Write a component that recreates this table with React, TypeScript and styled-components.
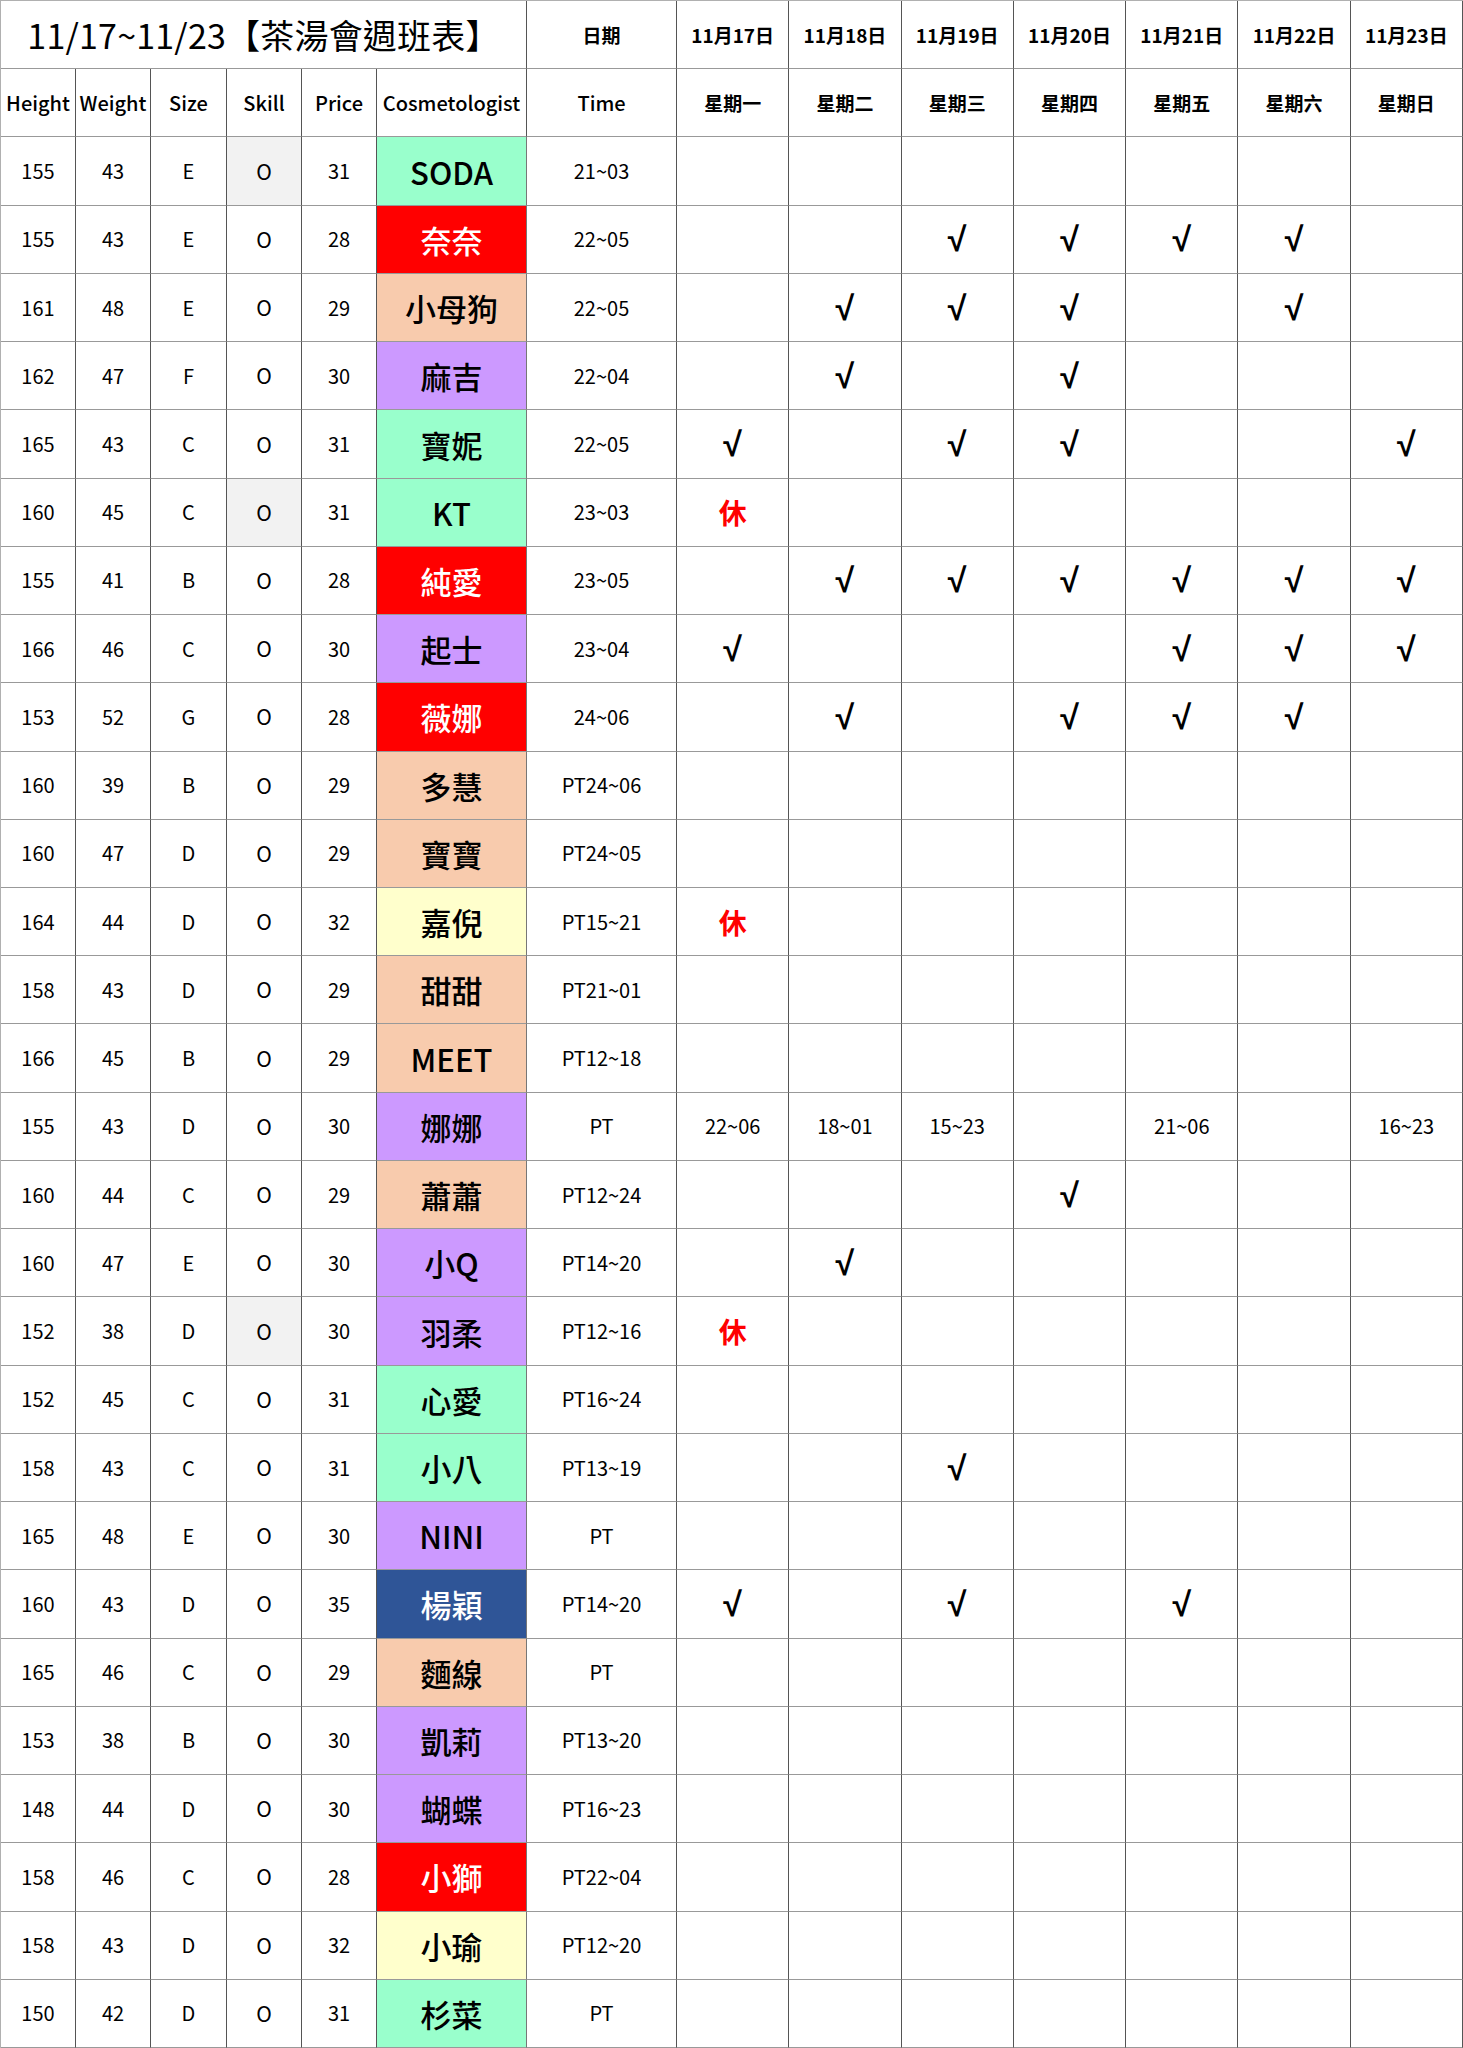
import React from "react";
import styled, { createGlobalStyle } from "styled-components";

const GlobalStyle = createGlobalStyle`
  html, body { margin: 0; padding: 0; background: #ffffff; }
  body { font-family: "Noto Sans CJK TC", "Noto Sans", sans-serif; color: #000; }
`;

const COLORS = {
  green: "#99FFCC",
  red: "#FF0000",
  peach: "#F8CBAD",
  purple: "#CC99FF",
  yellow: "#FFFFCC",
  blue: "#2F5597",
} as const;

type Tone = keyof typeof COLORS;

const Sheet = styled.div`
  display: grid;
  width: 1463px;
  height: 2048px;
  grid-template-columns: 75px 75px 76px 75px 75px 150px 150px repeat(7, 1fr);
  grid-template-rows: repeat(30, 1fr);
  border-top: 1px solid #b0b0b0;
  border-left: 1px solid #b0b0b0;
  box-sizing: border-box;
`;

const Cell = styled.div`
  display: flex;
  align-items: center;
  justify-content: center;
  box-sizing: border-box;
  border-right: 1px solid #555;
  border-bottom: 1px solid #999;
  font-size: 20px;
  line-height: 1;
  white-space: nowrap;
  overflow: hidden;
`;

const TitleCell = styled(Cell)`
  grid-column: span 6;
  font-size: 34px;
  font-weight: 400;
  letter-spacing: 0.2px;
`;

const HeadCell = styled(Cell)<{ $bold?: boolean }>`
  font-size: ${(p) => (p.$bold ? "19px" : "20px")};
  font-weight: ${(p) => (p.$bold ? 700 : 500)};
`;

const DataCell = styled(Cell)`
  font-size: 20px;
  font-weight: 400;
`;

const SkillCell = styled(DataCell)<{ $shaded?: boolean }>`
  background: ${(p) => (p.$shaded ? "#F2F2F2" : "transparent")};
  font-size: 21px;
`;

const NameCell = styled(Cell)<{ $tone: Tone }>`
  background: ${(p) => COLORS[p.$tone]};
  color: ${(p) => (p.$tone === "red" || p.$tone === "blue" ? "#ffffff" : "#000000")};
  font-size: 31px;
  font-weight: 500;
  border-right-color: #777;
`;

const DayCell = styled(Cell)<{ $kind: "check" | "rest" | "time" | "none" }>`
  font-family: ${(p) =>
    p.$kind === "check" ? '"Liberation Sans", "DejaVu Sans", sans-serif' : "inherit"};
  font-size: ${(p) => (p.$kind === "check" ? "34px" : p.$kind === "rest" ? "28px" : "20px")};
  font-weight: ${(p) => (p.$kind === "rest" || p.$kind === "check" ? 700 : 400)};
  color: ${(p) => (p.$kind === "rest" ? "#FF0000" : "#000")};
`;

type Row = {
  h: number;
  w: number;
  size: string;
  shaded?: boolean;
  price: number;
  name: string;
  tone: Tone;
  time: string;
  days: string[];
};

const V = "√";
const R = "休";
const _ = "";

const rows: Row[] = [
  { h: 155, w: 43, size: "E", shaded: true, price: 31, name: "SODA", tone: "green", time: "21~03", days: [_, _, _, _, _, _, _] },
  { h: 155, w: 43, size: "E", price: 28, name: "奈奈", tone: "red", time: "22~05", days: [_, _, V, V, V, V, _] },
  { h: 161, w: 48, size: "E", price: 29, name: "小母狗", tone: "peach", time: "22~05", days: [_, V, V, V, _, V, _] },
  { h: 162, w: 47, size: "F", price: 30, name: "麻吉", tone: "purple", time: "22~04", days: [_, V, _, V, _, _, _] },
  { h: 165, w: 43, size: "C", price: 31, name: "寶妮", tone: "green", time: "22~05", days: [V, _, V, V, _, _, V] },
  { h: 160, w: 45, size: "C", shaded: true, price: 31, name: "KT", tone: "green", time: "23~03", days: [R, _, _, _, _, _, _] },
  { h: 155, w: 41, size: "B", price: 28, name: "純愛", tone: "red", time: "23~05", days: [_, V, V, V, V, V, V] },
  { h: 166, w: 46, size: "C", price: 30, name: "起士", tone: "purple", time: "23~04", days: [V, _, _, _, V, V, V] },
  { h: 153, w: 52, size: "G", price: 28, name: "薇娜", tone: "red", time: "24~06", days: [_, V, _, V, V, V, _] },
  { h: 160, w: 39, size: "B", price: 29, name: "多慧", tone: "peach", time: "PT24~06", days: [_, _, _, _, _, _, _] },
  { h: 160, w: 47, size: "D", price: 29, name: "寶寶", tone: "peach", time: "PT24~05", days: [_, _, _, _, _, _, _] },
  { h: 164, w: 44, size: "D", price: 32, name: "嘉倪", tone: "yellow", time: "PT15~21", days: [R, _, _, _, _, _, _] },
  { h: 158, w: 43, size: "D", price: 29, name: "甜甜", tone: "peach", time: "PT21~01", days: [_, _, _, _, _, _, _] },
  { h: 166, w: 45, size: "B", price: 29, name: "MEET", tone: "peach", time: "PT12~18", days: [_, _, _, _, _, _, _] },
  { h: 155, w: 43, size: "D", price: 30, name: "娜娜", tone: "purple", time: "PT", days: ["22~06", "18~01", "15~23", _, "21~06", _, "16~23"] },
  { h: 160, w: 44, size: "C", price: 29, name: "蕭蕭", tone: "peach", time: "PT12~24", days: [_, _, _, V, _, _, _] },
  { h: 160, w: 47, size: "E", price: 30, name: "小Q", tone: "purple", time: "PT14~20", days: [_, V, _, _, _, _, _] },
  { h: 152, w: 38, size: "D", shaded: true, price: 30, name: "羽柔", tone: "purple", time: "PT12~16", days: [R, _, _, _, _, _, _] },
  { h: 152, w: 45, size: "C", price: 31, name: "心愛", tone: "green", time: "PT16~24", days: [_, _, _, _, _, _, _] },
  { h: 158, w: 43, size: "C", price: 31, name: "小八", tone: "green", time: "PT13~19", days: [_, _, V, _, _, _, _] },
  { h: 165, w: 48, size: "E", price: 30, name: "NINI", tone: "purple", time: "PT", days: [_, _, _, _, _, _, _] },
  { h: 160, w: 43, size: "D", price: 35, name: "楊穎", tone: "blue", time: "PT14~20", days: [V, _, V, _, V, _, _] },
  { h: 165, w: 46, size: "C", price: 29, name: "麵線", tone: "peach", time: "PT", days: [_, _, _, _, _, _, _] },
  { h: 153, w: 38, size: "B", price: 30, name: "凱莉", tone: "purple", time: "PT13~20", days: [_, _, _, _, _, _, _] },
  { h: 148, w: 44, size: "D", price: 30, name: "蝴蝶", tone: "purple", time: "PT16~23", days: [_, _, _, _, _, _, _] },
  { h: 158, w: 46, size: "C", price: 28, name: "小獅", tone: "red", time: "PT22~04", days: [_, _, _, _, _, _, _] },
  { h: 158, w: 43, size: "D", price: 32, name: "小瑜", tone: "yellow", time: "PT12~20", days: [_, _, _, _, _, _, _] },
  { h: 150, w: 42, size: "D", price: 31, name: "杉菜", tone: "green", time: "PT", days: [_, _, _, _, _, _, _] },
];

const dates = ["11月17日", "11月18日", "11月19日", "11月20日", "11月21日", "11月22日", "11月23日"];
const weekdays = ["星期一", "星期二", "星期三", "星期四", "星期五", "星期六", "星期日"];
const labels = ["Height", "Weight", "Size", "Skill", "Price", "Cosmetologist", "Time"];

const kindOf = (v: string): "check" | "rest" | "time" | "none" =>
  v === V ? "check" : v === R ? "rest" : v ? "time" : "none";

export default function App() {
  return (
    <>
      <GlobalStyle />
      <Sheet>
        <TitleCell>11/17~11/23【茶湯會週班表】</TitleCell>
        <HeadCell $bold>日期</HeadCell>
        {dates.map((d) => (
          <HeadCell key={d} $bold>
            {d}
          </HeadCell>
        ))}
        {labels.map((l) => (
          <HeadCell key={l}>{l}</HeadCell>
        ))}
        {weekdays.map((d) => (
          <HeadCell key={d} $bold>
            {d}
          </HeadCell>
        ))}
        {rows.map((r, i) => (
          <React.Fragment key={i}>
            <DataCell>{r.h}</DataCell>
            <DataCell>{r.w}</DataCell>
            <DataCell>{r.size}</DataCell>
            <SkillCell $shaded={r.shaded}>O</SkillCell>
            <DataCell>{r.price}</DataCell>
            <NameCell $tone={r.tone}>{r.name}</NameCell>
            <DataCell>{r.time}</DataCell>
            {r.days.map((d, j) => (
              <DayCell key={j} $kind={kindOf(d)}>
                {d}
              </DayCell>
            ))}
          </React.Fragment>
        ))}
      </Sheet>
    </>
  );
}
